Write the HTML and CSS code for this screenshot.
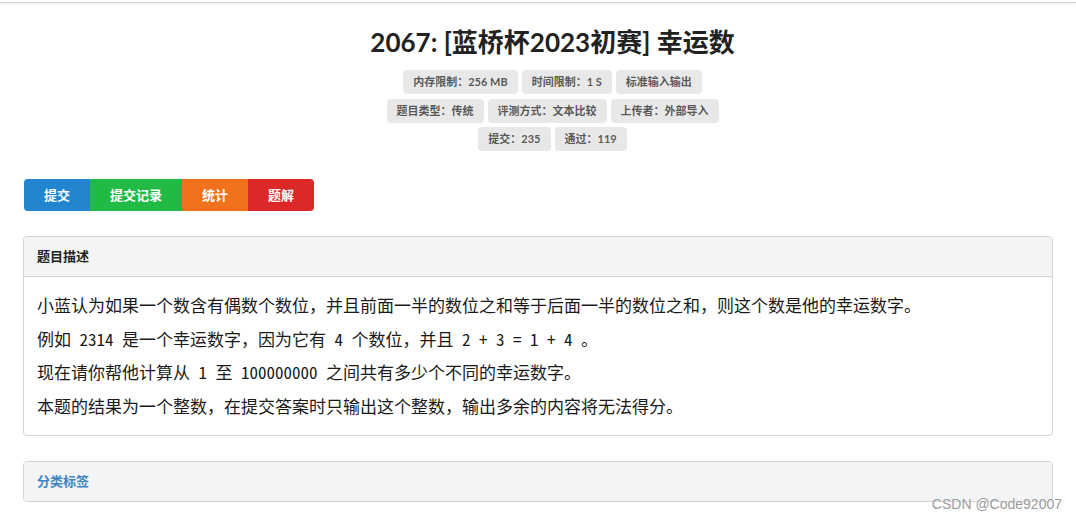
FILE: index.html
```html
<!DOCTYPE html>
<html lang="zh-CN">
<head>
  <meta charset="UTF-8" />
  <meta name="viewport" content="width=device-width, initial-scale=1.0"/>
  <title>2067: [蓝桥杯2023初赛] 幸运数</title>
  <link rel="stylesheet" href="styles.css">
</head>
<body>

<div class="topbar"></div>

<div class="page">
  <div class="head">
    <h1 class="title">2067: [蓝桥杯2023初赛] 幸运数</h1>

    <div class="meta">
      <div class="meta-row">
        <span class="tag">内存限制：256 MB</span>
        <span class="tag">时间限制：1 S</span>
        <span class="tag">标准输入输出</span>
      </div>
      <div class="meta-row">
        <span class="tag">题目类型：传统</span>
        <span class="tag">评测方式：文本比较</span>
        <span class="tag">上传者：外部导入</span>
      </div>
      <div class="meta-row">
        <span class="tag">提交：235</span>
        <span class="tag">通过：119</span>
      </div>
    </div>
  </div>

  <div class="btn-group">
    <a href="#" class="btn blue">提交</a>
    <a href="#" class="btn green">提交记录</a>
    <a href="#" class="btn orange">统计</a>
    <a href="#" class="btn red">题解</a>
  </div>

  <div class="segment">
    <div class="seg-header">题目描述</div>
    <div class="seg-body">
      <p>小蓝认为如果一个数含有偶数个数位，并且前面一半的数位之和等于后面一半的数位之和，则这个数是他的幸运数字。</p>
      <p>例如 2314 是一个幸运数字，因为它有 4 个数位，并且 2 + 3 = 1 + 4 。</p>
      <p>现在请你帮他计算从 1 至 100000000 之间共有多少个不同的幸运数字。</p>
      <p>本题的结果为一个整数，在提交答案时只输出这个整数，输出多余的内容将无法得分。</p>
    </div>
  </div>

  <div class="segment second">
    <div class="seg-header link">分类标签</div>
  </div>
</div>

<div class="watermark">CSDN @Code92007</div>

</body>
</html>
```

FILE: styles.css
```css
body {
  margin: 0;
  background: #fff;
  font-family: Lato, "Noto Sans CJK SC", sans-serif;
  color: rgba(0,0,0,0.87);
  position: relative;
  min-height: 520px;
}

.topbar {
  height: 2px;
  background: #fff;
  border-bottom: 1px solid #d4d4d5;
  box-shadow: 0 1px 2px rgba(0,0,0,0.08);
}

.page {
  padding: 0 23px;
}

.head {
  padding-left: 29px;
}

.title {
  margin: 22px 0 0;
  text-align: center;
  font-size: 26px;
  line-height: 34px;
  font-weight: 700;
  color: #222;
}

.meta {
  margin-top: 11px;
  display: flex;
  flex-direction: column;
  gap: 4.5px;
}

.meta-row {
  display: flex;
  justify-content: center;
  gap: 4px;
}

.tag {
  display: inline-block;
  background: #e8e8e8;
  color: rgba(0,0,0,0.65);
  font-size: 11px;
  font-weight: 700;
  line-height: 12px;
  padding: 6px 10px;
  border-radius: 4px;
}

.btn-group {
  display: flex;
  margin: 28px 0 0 1px;
}

.btn {
  display: block;
  height: 32px;
  line-height: 32px;
  padding: 0 20px;
  color: #fff;
  font-size: 13px;
  font-weight: 700;
  text-decoration: none;
}

.btn:first-child {
  border-radius: 4px 0 0 4px;
}

.btn:last-child {
  border-radius: 0 4px 4px 0;
}

.blue { background: #2185d0; }
.green { background: #21ba45; }
.orange { background: #f2711c; }
.red { background: #db2828; }

.segment {
  margin-top: 25px;
  border: 1px solid #d4d4d5;
  border-radius: 4px;
  overflow: hidden;
}

.segment.second {
  margin-top: 25px;
}

.seg-header {
  background: #f3f4f5;
  height: 39px;
  line-height: 39px;
  padding: 0 13px;
  font-size: 13px;
  font-weight: 700;
  color: #222;
  border-bottom: 1px solid #d4d4d5;
}

.segment.second .seg-header {
  border-bottom: none;
  height: 39px;
}

.seg-header.link {
  color: #4183c4;
}

.seg-body {
  padding: 11px 13px 13px;
  font-family: "Noto Sans Mono CJK SC", "Liberation Mono", "Noto Sans CJK SC", monospace;
  font-size: 17px;
  line-height: 33.5px;
  color: #1a1a1a;
}

.seg-body p {
  margin: 0;
}

.watermark {
  position: absolute;
  right: 14px;
  top: 496px;
  font-family: "Liberation Sans", Arial, sans-serif;
  font-size: 14px;
  color: #9a9a9a;
  text-shadow: 0 0 2px #fff;
}
```
